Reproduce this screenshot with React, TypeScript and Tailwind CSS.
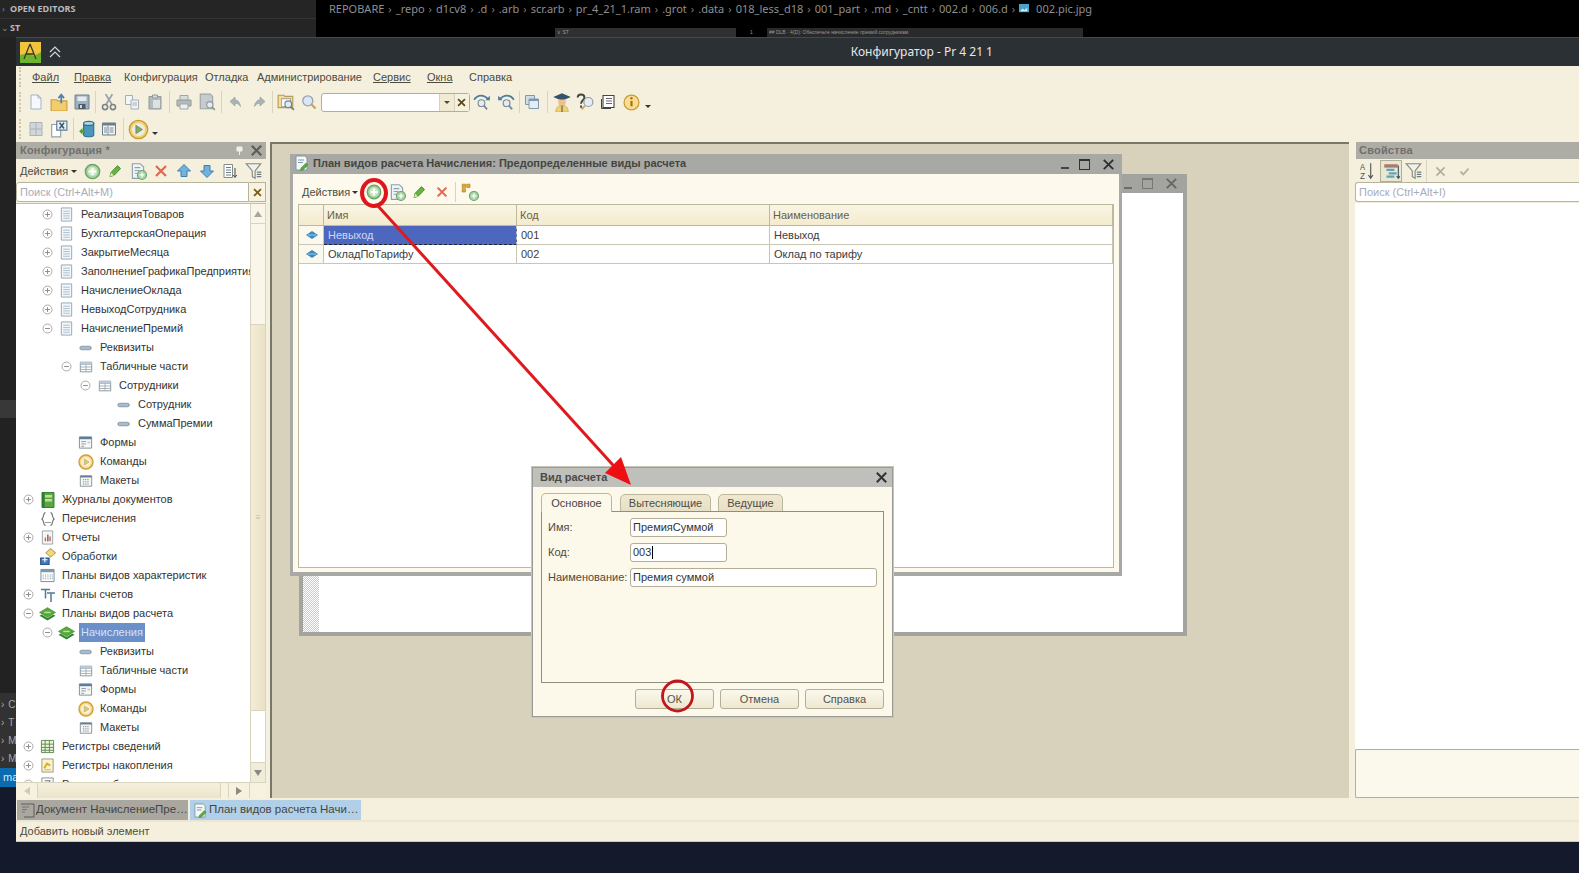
import React from "react";

type P = { s?: number; children?: React.ReactNode; className?: string };
const Svg = ({ s = 16, children, className }: P) => (
  <svg width={s} height={s} viewBox="0 0 16 16" fill="none" className={`shrink-0 ${className ?? ""}`}>{children}</svg>
);

const PlusBadge = () => (
  <g>
    <circle cx="11.5" cy="11.5" r="4" fill="#a9d4a4" stroke="#6f9f72" />
    <path d="M11.5 9.3v4.4M9.3 11.5h4.4" stroke="#fff" strokeWidth="1.2" />
  </g>
);
const Page = ({ fill = "#f7fbff", line = "#8ea0ad" }: { fill?: string; line?: string }) => (
  <path d="M3 1.5h7l3 3v10H3z" fill={fill} stroke={line} />
);

const IAdd = ({ s = 18 }: { s?: number }) => (
  <Svg s={s}>
    <circle cx="8" cy="8" r="6.7" fill="#a7d3a0" stroke="#6da46b" strokeWidth="1.4" />
    <circle cx="8" cy="8" r="4.4" fill="#cde8c8" />
    <path d="M8 4.6v6.8M4.6 8h6.8" stroke="#fff" strokeWidth="2" />
  </Svg>
);
const IPencil = () => (
  <Svg>
    <path d="M3 13.5l1-4 6.5-6.8 3 2.9L7 12.4z" fill="#69b244" stroke="#3f8a2e" />
    <path d="M3 13.5l1-4 3 2.9z" fill="#d8e9a8" />
  </Svg>
);
const IDocAdd = () => (
  <Svg s={18}>
    <Page fill="#eef4f6" />
    <path d="M5 5h5M5 7.5h4M5 10h2.5" stroke="#8ea0ad" />
    <PlusBadge />
  </Svg>
);
const IX = ({ c = "#e3674f", w = 2.4, s = 16 }: { c?: string; w?: number; s?: number }) => (
  <Svg s={s}>
    <path d="M3 3l10 10M13 3L3 13" stroke={c} strokeWidth={w} />
  </Svg>
);
const IArrow = ({ down }: { down?: boolean }) => (
  <Svg className={down ? "rotate-180" : ""}>
    <path d="M8 1.5L14.5 8H11v5.5H5V8H1.5z" fill="#6fb2dc" stroke="#3f7fae" />
  </Svg>
);
const IListDown = () => (
  <Svg>
    <path d="M2 1.5h8.5v13H2z" fill="#fff" stroke="#7f8c8d" />
    <path d="M4 4.5h5M4 7h5M4 9.500h5M4 12h5" stroke="#6f7d85" />
    <path d="M13 5v8.500M11.300 12l1.700 2.500 1.700-2.500" stroke="#444" />
  </Svg>
);
const IFilter = () => (
  <Svg s={18}>
    <path d="M1 1.500h13L9 8v6.500L6.500 13V8z" fill="#eef0ea" stroke="#85897d" />
    <path d="M10.500 9h4M10.500 11h4M10.500 13h4" stroke="#6f7d85" />
  </Svg>
);
const ICirclePM = ({ minus }: { minus?: boolean }) => (
  <Svg s={11}>
    <circle cx="8" cy="8" r="6.500" fill="#fff" stroke="#a8a8a8" strokeWidth="1.400" />
    <path d={minus ? "M4.500 8h7" : "M4.500 8h7M8 4.500v7"} stroke="#8a8a8a" strokeWidth="1.400" />
  </Svg>
);

const TDoc = () => (
  <Svg s={15}>
    <path d="M2.500 1h11v14h-11z" fill="#f2f7fb" stroke="#97a3ac" />
    <path d="M4.500 4.500h7M4.500 7h7M4.500 9.500h7M4.500 12h7" stroke="#a9bccb" />
  </Svg>
);
const TAttr = () => (
  <Svg s={14}>
    <rect x="1" y="6" width="13" height="4" rx="2" fill="#a9bccb" stroke="#82929e" />
  </Svg>
);
const TTable = () => (
  <Svg s={14}>
    <path d="M1.500 2.500h13v11h-13z" fill="#fff" stroke="#7f8d96" />
    <path d="M1.500 5h13M8 2.500v11M1.500 8h13M1.500 10.800h13" stroke="#9aa8b2" />
    <path d="M1.500 2.500h13V5h-13z" fill="#bccad3" />
  </Svg>
);
const TForm = () => (
  <Svg s={15}>
    <path d="M1.500 2h13v12h-13z" fill="#f7f8f6" stroke="#7f8d96" />
    <path d="M1.500 2h13v2.500h-13z" fill="#5b7f9e" />
    <path d="M3.500 7h5M3.500 9.500h5M3.500 12h3" stroke="#8a98a2" />
    <path d="M10 7h3v2h-3z" fill="#c7ced3" />
  </Svg>
);
const TCmd = () => (
  <Svg s={16}>
    <circle cx="8" cy="8" r="7" fill="#f5d88a" stroke="#cf9f38" strokeWidth="1.400" />
    <circle cx="8" cy="8" r="4.800" fill="#fdf3d3" />
    <path d="M6.300 5l4.700 3-4.700 3z" fill="#d9c98c" stroke="#b9a05a" strokeWidth=".6" />
  </Svg>
);
const TMak = () => (
  <Svg s={14}>
    <path d="M1.500 2h13v12h-13z" fill="#f7f8f6" stroke="#7f8d96" />
    <path d="M1.500 2h13v2h-13z" fill="#6b8095" />
    <path d="M4.500 6.500h7M4.500 9h7M4.500 11.500h7" stroke="#6f7d85" strokeDasharray="1.500 1" />
  </Svg>
);
const TJournal = () => (
  <Svg s={16}>
    <path d="M2 .5h12v15H2z" fill="#5aa544" stroke="#3d7f30" />
    <path d="M5 3h7v2.500H5zM5 7h7v2.500H5z" fill="#c2e18f" />
    <path d="M2 .5h2.500v15H2z" fill="#2f7a33" />
  </Svg>
);
const TEnum = () => (
  <Svg s={16}>
    <path d="M5.500 1.500C3 1.500 4 7 2 8c2 1 1 6.500 3.500 6.500M10.500 1.500C13 1.500 12 7 14 8c-2 1-1 6.500-3.500 6.500" stroke="#5f6870" strokeWidth="1.100" />
    <path d="M5.500 11.500h1M7.500 11.500h1M9.500 11.500h1" stroke="#333" />
  </Svg>
);
const TReport = () => (
  <Svg s={15}>
    <path d="M2.500 1h11v14h-11z" fill="#f8f6ee" stroke="#97a3ac" />
    <path d="M5 12V8h1.500v4zM7.500 12V5H9v7zM10 12V7h1.500v5z" fill="#c4655f" />
    <path d="M7.500 12V5H9v7z" fill="#5a86b3" />
  </Svg>
);
const TProc = () => (
  <Svg s={17}>
    <path d="M11 .5L15.500 4.500 11 8.500 6.500 4.500z" fill="#efd987" stroke="#c3a84a" />
    <path d="M1.500 9.500h8v6h-8z" fill="#3f79b5" stroke="#2a5a8f" />
    <path d="M5.500 6v7.500M3 11h5" stroke="#fff" />
  </Svg>
);
const TChar = () => (
  <Svg s={15}>
    <path d="M1 1.500h14v13H1z" fill="#fff" stroke="#728a9c" />
    <path d="M1 1.500h14V4.500H1z" fill="#7d98ad" />
    <path d="M3.500 7v5M6 7v5M8.500 7v5M11 7v5M13 7v5" stroke="#6d8aa1" strokeDasharray="1 1" />
  </Svg>
);
const TAcc = () => (
  <Svg s={16}>
    <path d="M1 2.500h9M5.500 2.500v9M7 6h8M11 6v9" stroke="#557a93" strokeWidth="1.500" />
  </Svg>
);
const TLayers = ({ s = 17 }: { s?: number }) => (
  <Svg s={s}>
    <path d="M8 2.500L15.500 7 8 11.500.5 7z" fill="#58a83e" stroke="#37832b" strokeWidth=".6" />
    <path d="M2.500 9L8 12.300 13.500 9l2 1.200L8 14.500.5 10.200z" fill="#2f8a2c" />
    <path d="M5 7h6" stroke="#bfe28e" strokeWidth="1.400" />
  </Svg>
);
const TRegInfo = () => (
  <Svg s={15}>
    <path d="M1.500 1.500h13v13h-13z" fill="#e9f3dc" stroke="#5f8a4f" />
    <path d="M1.500 5.500h13M1.500 9h13M1.500 12h13M5.500 1.500v13M10 1.500v13" stroke="#5f8a4f" />
  </Svg>
);
const TRegAcc = () => (
  <Svg s={15}>
    <path d="M2 1h12v14H2z" fill="#fbf3cf" stroke="#9c9776" />
    <path d="M4.500 11l3-5 3.500 2" stroke="#d8ac1e" strokeWidth="2" />
    <path d="M4.500 12.500h7" stroke="#b1b39d" />
  </Svg>
);
const TReg3 = () => (
  <Svg s={15}>
    <path d="M2 1h12v14H2z" fill="#fff" stroke="#7f8d96" />
    <path d="M5 4h6l-3 3 3 3H5" stroke="#5f6d75" />
  </Svg>
);

const gr = "#a6b0b4";
const ToolIcons = {
  newDoc: () => (
    <Svg><path d="M3 1h7l3 3v11H3z" fill="#f5f9fe" stroke="#a2b3c2" /><path d="M10 1v3h3" stroke="#a2b3c2" /></Svg>
  ),
  open: () => (
    <Svg s={18}><path d="M1 6h5l1 1h8v9H1z" fill="#f3cc6e" stroke="#c79e3a" /><path d="M10 9V2M7.500 4.500L10 1.500l2.500 3" stroke="#4d83ad" strokeWidth="1.600" /></Svg>
  ),
  save: () => (
    <Svg><path d="M1 1h14v14H1z" fill="#9fb1bf" stroke="#6f8494" /><path d="M3.500 2.500h9v4.500h-9z" fill="#e5ebef" /><path d="M4.500 10h7v5h-7z" fill="#4e5b66" /><path d="M6 11h2v3H6z" fill="#cfd8de" /></Svg>
  ),
  cut: () => (
    <Svg s={18}><path d="M5 1l5.500 9M11 1L5.500 10" stroke="#9aa2a8" strokeWidth="1.600" /><circle cx="4.500" cy="12.500" r="2.300" stroke="#7b8388" strokeWidth="1.400" /><circle cx="11.500" cy="12.500" r="2.300" stroke="#7b8388" strokeWidth="1.400" /></Svg>
  ),
  copy: () => (
    <Svg><path d="M1.500 1.500h7v9h-7z" fill="#f4f6f7" stroke={gr} /><path d="M7 6h7.500v9H7z" fill="#eef3f6" stroke={gr} /><path d="M8.500 9h4.500M8.500 11h4.500" stroke={gr} /></Svg>
  ),
  paste: () => (
    <Svg><path d="M2 2.500h12V15H2z" fill="#b3bbbd" stroke="#8f989b" /><path d="M5.500 1h5v3h-5z" fill="#d6dbdc" stroke="#8f989b" /><path d="M6 6h7v8H6z" fill="#dce1e3" /></Svg>
  ),
  print: () => (
    <Svg><path d="M4 1.500h8v5H4z" fill="#d8dcdc" stroke="#9ea5a6" /><path d="M1 6h14v6H1z" fill="#b5babb" stroke="#8f989b" /><path d="M4 10h8v5H4z" fill="#eef0f0" stroke="#9ea5a6" /></Svg>
  ),
  preview: () => (
    <Svg s={18}><path d="M2 1h9l2 2v11H2z" fill="#c5cbce" stroke="#9ea5a6" /><circle cx="10.500" cy="10.500" r="2.800" fill="#e5ebef" stroke="#8f989b" /><path d="M12.500 12.500l2.500 2.500" stroke="#8f989b" strokeWidth="1.500" /></Svg>
  ),
  undo: () => (
    <Svg><path d="M7 3L2 7.500 7 12V9.300c2.500 0 4 .8 5.500 3.200C12 8.500 10 6 7 5.800z" fill="#a9b3b8" stroke="#8f989b" strokeWidth=".6" /></Svg>
  ),
  redo: () => (
    <Svg className="-scale-x-100"><path d="M7 3L2 7.500 7 12V9.300c2.500 0 4 .8 5.500 3.200C12 8.500 10 6 7 5.800z" fill="#a9b3b8" stroke="#8f989b" strokeWidth=".6" /></Svg>
  ),
  findFiles: () => (
    <Svg s={18}><path d="M1 2h5l1 1h7v10H1z" fill="#f5dd9b" stroke="#b79c52" /><path d="M4 5h8v7H4z" fill="#fff" stroke="#aaa" /><circle cx="10" cy="10" r="3" fill="#dfeaf1" stroke="#6f8494" /><path d="M12 12l3 3" stroke="#6f8494" strokeWidth="1.600" /></Svg>
  ),
  search: () => (
    <Svg><circle cx="6.800" cy="6.800" r="5" fill="#dde5f2" stroke="#92a3b8" strokeWidth="1.300" /><path d="M10.500 10.500l4 4" stroke="#c79e5a" strokeWidth="2.200" /></Svg>
  ),
  searchPrev: () => (
    <Svg s={18}><path d="M1 6c3-5 9-5 13 0" stroke="#4d7d9c" strokeWidth="1.500" /><path d="M15 2.500v4h-4" fill="#4d7d9c" /><circle cx="7.500" cy="9" r="3" fill="#e5ebef" stroke="#788a99" /><path d="M9.500 11l3 3.500" stroke="#788a99" strokeWidth="1.600" /></Svg>
  ),
  searchNext: () => (
    <Svg s={18} className=""><path d="M15 6C12 1 6 1 2 6" stroke="#4d7d9c" strokeWidth="1.500" /><path d="M1 2.500v4h4" fill="#4d7d9c" /><circle cx="8.500" cy="9" r="3" fill="#e5ebef" stroke="#788a99" /><path d="M10.500 11l3 3.500" stroke="#788a99" strokeWidth="1.600" /></Svg>
  ),
  windows: () => (
    <Svg><path d="M1.500 1.500h9v9h-9z" fill="#cfdde8" stroke="#7f98ab" /><path d="M5 5h9.500v9.500H5z" fill="#e4edf4" stroke="#7f98ab" /><path d="M5 5h9.500v2H5z" fill="#7f98ab" /></Svg>
  ),
  scholar: () => (
    <Svg s={20}><path d="M8 1l7 3-7 3-7-3z" fill="#34536b" /><path d="M5 6h6v2.500a3 3 0 01-6 0z" fill="#eec08f" /><path d="M3 16c0-4 2-5 5-5s5 1 5 5z" fill="#f0d36f" stroke="#c4a545" strokeWidth=".5" /><path d="M8 11v5" stroke="#666" /></Svg>
  ),
  helpFind: () => (
    <Svg s={18}><path d="M1.500 4c0-3.500 6-3.500 6 0 0 2.500-3 2.500-3 5.500M4.500 11v2" stroke="#444" strokeWidth="1.700" /><circle cx="11" cy="8" r="4" fill="#e6edf2" stroke="#8a9aa6" /><path d="M8 11.500l-3 3" stroke="#c3a45a" strokeWidth="1.500" /></Svg>
  ),
  book: () => (
    <Svg><path d="M3 1.500h11v12H3z" fill="#fff" stroke="#444" strokeWidth="1.100" /><path d="M6 4.500h6M6 7h6M6 9.500h6" stroke="#666" /><path d="M1.500 5v9.500H11" stroke="#444" /></Svg>
  ),
  info: () => (
    <Svg s={17}><circle cx="8" cy="8" r="7" fill="#f9dd92" stroke="#c79e3a" strokeWidth="1.200" /><path d="M8 6.500v5" stroke="#b06a12" strokeWidth="2" /><circle cx="8" cy="4" r="1.100" fill="#b06a12" /></Svg>
  ),
  grid: () => (
    <Svg><path d="M2 1.500h12v13H2z" fill="#d0d6d9" stroke="#aab3b6" /><path d="M8 1.500v13M2 8h12" stroke="#aab3b6" /></Svg>
  ),
  xDoc: () => (
    <Svg s={18}><path d="M1.500 4h8v11h-8z" fill="#fff" stroke="#91a0aa" /><path d="M6 1h9v8H6z" fill="#eaf1f5" stroke="#577c96" /><path d="M8.500 2.500l4 5M12.500 2.500l-4 5" stroke="#36566e" strokeWidth="1.300" /></Svg>
  ),
  db: () => (
    <Svg s={18}><path d="M5 3v10c0 2.500 9 2.500 9 0V3z" fill="#4a96bc" stroke="#2d6f90" /><ellipse cx="9.500" cy="3" rx="4.500" ry="1.800" fill="#b5d8e8" stroke="#2d6f90" /><path d="M1 10l3-3v2h2v2H4v2z" fill="#4d9e3b" /></Svg>
  ),
  tableWin: () => (
    <Svg><path d="M1.500 2h13v12h-13z" fill="#f0f3f4" stroke="#6a7e8b" /><path d="M1.500 2h13v2.500h-13z" fill="#6a7e8b" /><path d="M7 4.500V14M3 7h3M3 9h3M3 11h3M8.500 7h4M8.500 9h4M8.500 11h4" stroke="#7d8e99" /></Svg>
  ),
  play: () => (
    <Svg s={21}><circle cx="8" cy="8" r="7" fill="#f4cf6f" stroke="#c49a36" strokeWidth="1" /><circle cx="8" cy="8" r="5" fill="#eaedd9" /><path d="M6 4.800l5 3.200-5 3.200z" fill="#8aa36f" stroke="#5d7d55" strokeWidth=".5" /></Svg>
  ),
  keyAdd: () => (
    <Svg s={18}><path d="M1 1h3v3H1zM5 1h3v3H5zM1 5h3v3H1z" fill="#e0a82a" stroke="#a97a10" strokeWidth=".5" /><PlusBadge /></Svg>
  ),
  az: () => (
    <Svg s={18}><text x="0" y="7" fontSize="7.500" fill="#555" fontFamily="Liberation Mono">A</text><text x="0" y="15" fontSize="7.500" fill="#555" fontFamily="Liberation Mono">Z</text><path d="M9.500 1v13M7.500 11.500l2 3 2-3" stroke="#555" /></Svg>
  ),
  cat: () => (
    <Svg s={18}><path d="M2 2h12v3H2z" fill="#8d4b45" opacity=".7" /><path d="M4 6h7v2H4zM6 9h7v2H6zM4 12h7v2H4z" fill="#62a3b7" /><path d="M14.500 3v11M13 12.500l1.500 2 1.500-2" stroke="#456" /></Svg>
  ),
};

const Tool = ({ children, w = "w-[23px]" }: { children: React.ReactNode; w?: string }) => (
  <div className={`flex h-[22px] items-center justify-center ${w}`}>{children}</div>
);
const Sep = ({ w = "w-[6px]" }: { w?: string }) => (
  <div className={`flex h-[22px] justify-center ${w}`}><div className="h-full w-px bg-[#d9d4bd]" /></div>
);
const Grip = () => <div className="ml-[3px] h-[20px] w-[3px] border-l-2 border-dotted border-[#cdc8ad]" />;
const Caret = ({ c = "border-t-[#333]" }: { c?: string }) => (
  <div className={`h-0 w-0 border-x-[3px] border-t-[3px] border-x-transparent ${c}`} />
);

const T = ToolIcons;

type Row = { l: number; t: string; i: React.ReactNode; e?: "p" | "m"; sel?: boolean };
const rows: Row[] = [
  { l: 1, t: "РеализацияТоваров", i: <TDoc />, e: "p" },
  { l: 1, t: "БухгалтерскаяОперация", i: <TDoc />, e: "p" },
  { l: 1, t: "ЗакрытиеМесяца", i: <TDoc />, e: "p" },
  { l: 1, t: "ЗаполнениеГрафикаПредприятия", i: <TDoc />, e: "p" },
  { l: 1, t: "НачислениеОклада", i: <TDoc />, e: "p" },
  { l: 1, t: "НевыходСотрудника", i: <TDoc />, e: "p" },
  { l: 1, t: "НачислениеПремий", i: <TDoc />, e: "m" },
  { l: 2, t: "Реквизиты", i: <TAttr /> },
  { l: 2, t: "Табличные части", i: <TTable />, e: "m" },
  { l: 3, t: "Сотрудники", i: <TTable />, e: "m" },
  { l: 4, t: "Сотрудник", i: <TAttr /> },
  { l: 4, t: "СуммаПремии", i: <TAttr /> },
  { l: 2, t: "Формы", i: <TForm /> },
  { l: 2, t: "Команды", i: <TCmd /> },
  { l: 2, t: "Макеты", i: <TMak /> },
  { l: 0, t: "Журналы документов", i: <TJournal />, e: "p" },
  { l: 0, t: "Перечисления", i: <TEnum /> },
  { l: 0, t: "Отчеты", i: <TReport />, e: "p" },
  { l: 0, t: "Обработки", i: <TProc /> },
  { l: 0, t: "Планы видов характеристик", i: <TChar /> },
  { l: 0, t: "Планы счетов", i: <TAcc />, e: "p" },
  { l: 0, t: "Планы видов расчета", i: <TLayers />, e: "m" },
  { l: 1, t: "Начисления", i: <TLayers />, e: "m", sel: true },
  { l: 2, t: "Реквизиты", i: <TAttr /> },
  { l: 2, t: "Табличные части", i: <TTable /> },
  { l: 2, t: "Формы", i: <TForm /> },
  { l: 2, t: "Команды", i: <TCmd /> },
  { l: 2, t: "Макеты", i: <TMak /> },
  { l: 0, t: "Регистры сведений", i: <TRegInfo />, e: "p" },
  { l: 0, t: "Регистры накопления", i: <TRegAcc />, e: "p" },
  { l: 0, t: "Регистры бухгалтерии", i: <TReg3 />, e: "p" },
];

const TreeRow = ({ r }: { r: Row }) => (
  <div className="flex h-[19px] items-center whitespace-nowrap" style={{ paddingLeft: 6 + r.l * 19 }}>
    <div className="flex w-[13px] shrink-0 justify-center">{r.e && <ICirclePM minus={r.e === "m"} />}</div>
    <div className="ml-[1px] flex w-[23px] shrink-0 justify-center">{r.i}</div>
    <span className={r.sel ? "ml-[1px] flex h-[19px] items-center bg-[#6a8fc9] px-[2px] text-[#d5e2f5]" : "ml-[3px] text-[#333333]"}>{r.t}</span>
  </div>
);

const PanelHeader = ({ title, children }: { title: string; children?: React.ReactNode }) => (
  <div className="flex h-[17px] items-center justify-between bg-[#adada6] pl-[4px] pr-[2px] text-[11px] font-bold tracking-[0.2px] text-[#70706c]">
    <span>{title}</span>
    {children}
  </div>
);

const SearchBox = ({ ph, children, open }: { ph: string; children?: React.ReactNode; open?: boolean }) => (
  <div className="flex h-[20px] items-stretch">
    <div className={`flex flex-1 items-center rounded-l-[3px] border border-[#b9b59c] bg-white pl-[3px] text-[11px] text-[#a9acb8] ${open ? "border-r-0" : ""}`}>{ph}</div>
    {children}
  </div>
);

const WinBtns = ({ muted }: { muted?: boolean }) => (
  <div className="flex items-center">
    <div className={`mr-[10px] mt-[8px] h-[2px] w-[8px] ${muted ? "bg-[#6c6c68]" : "bg-[#444]"}`} />
    <div className={`mr-[6px] h-[11px] w-[11px] border ${muted ? "border-t-2 border-[#777]" : "border-t-2 border-[#333]"}`} />
    <div className="flex w-[24px] justify-center"><IX c={muted ? "#666" : "#2f2f2f"} w={2} s={15} /></div>
  </div>
);

const Cell = ({ children, className }: { children?: React.ReactNode; className?: string }) => (
  <div className={`flex items-center border-r border-b border-[#c9c6b3] pl-[4px] pr-[3px] ${className ?? ""}`}>{children}</div>
);
const Diamond = () => (
  <svg width="12" height="8" viewBox="0 0 12 8"><path d="M6 0l6 4-6 4-6-4z" fill="#3d88bd" /><path d="M2 4h8" stroke="#9fd0ee" /></svg>
);
const HCell = ({ children }: { children?: React.ReactNode }) => (
  <div className="flex items-center border-r border-[#bdb99f] bg-gradient-to-b from-[#f9f5e4] to-[#f4ebcf] px-[3px] text-[#6c5f3e]">{children}</div>
);

const Tab = ({ children, w, active }: { children: React.ReactNode; w: string; active?: boolean }) => (
  <div className={`flex items-center justify-center rounded-t-[5px] border border-[#bbb79e] ${w} ${active ? "relative z-10 h-[19px] border-b-0 border-t-[#e0b060] bg-[#fcf8ea] text-[#444]" : "mt-[1px] h-[18px] bg-gradient-to-b from-[#efe8d0] to-[#e7dfc5] text-[#4d4d47]"}`}>{children}</div>
);
const Field = ({ label, value, w, caret }: { label: string; value: string; w: string; caret?: boolean }) => (
  <div className="flex h-[19px] items-center">
    <span className="w-[82px] whitespace-nowrap text-[#4b4a43]">{label}</span>
    <div className={`flex h-[19px] items-center rounded-[3px] border border-[#b2ae97] bg-white pl-[2px] text-[#333] ${w}`}>
      {value}{caret && <span className="ml-px h-[13px] w-px bg-black" />}
    </div>
  </div>
);
const Btn = ({ children }: { children: React.ReactNode }) => (
  <div className="flex h-[20px] w-[79px] items-center justify-center rounded-[3px] border border-[#b2ae97] bg-gradient-to-b from-[#fbf8ec] to-[#eee7d1] text-[#55524a]">{children}</div>
);

const menu: [string, string, string][] = [
  ["Файл", "w-[42px]", "underline"],
  ["Правка", "w-[50px]", "underline"],
  ["Конфигурация", "w-[81px]", ""],
  ["Отладка", "w-[52px]", ""],
  ["Администрирование", "w-[116px]", ""],
  ["Сервис", "w-[54px]", "underline"],
  ["Окна", "w-[42px]", "underline"],
  ["Справка", "w-[60px]", ""],
];
const crumbs = ["REPOBARE", "_repo", "d1cv8", ".d", ".arb", "scr.arb", "pr_4_21_1.ram", ".grot", ".data", "018_less_d18", "001_part", ".md", "_cntt", "002.d", "006.d"];

export default function App() {
  return (
    <div className="relative flex h-[873px] w-[1579px] flex-col overflow-hidden bg-[#141a2c] font-['Liberation_Sans',sans-serif] text-[11px]">
      {/* editor top strip */}
      <div className="flex h-[37px] shrink-0 bg-black">
        <div className="flex w-[316px] flex-col bg-[#252526] font-['Open_Sans',sans-serif] text-[9px] font-bold text-[#bbbbbb]">
          <div className="flex h-[18px] items-center"><span className="w-[10px] pl-[2px] font-normal text-[#888]">›</span>OPEN EDITORS</div>
          <div className="flex h-[19px] items-center border-t border-[#333]"><span className="w-[10px] pl-[1px] font-normal text-[#888]">⌄</span>ST</div>
        </div>
        <div className="flex flex-1 flex-col">
          <div className="flex h-[28px] items-start gap-[4px] pl-[13px] pt-[0px] font-['Noto_Sans',sans-serif] text-[11px] leading-[18px] text-[#8f8f8f]">
            {crumbs.map((c, i) => (
              <React.Fragment key={i}>
                <span>{c}</span>
                <span className="text-[#777]">›</span>
              </React.Fragment>
            ))}
            <svg width="10" height="10" viewBox="0 0 11 11" className="mt-[4px]"><rect width="11" height="9" fill="#4ba3c7" /><path d="M1 8l3-3 2 2 3-3v4z" fill="#d5eef7" /></svg>
            <span className="ml-[3px]">002.pic.jpg</span>
          </div>
          <div className="flex h-[9px] items-center text-[5px] text-[#999]">
            <div className="ml-[239px] flex h-full w-[181px] items-center bg-[#303030] pl-[2px]">∨ ST</div>
            <div className="w-[31px] text-center">1</div>
            <div className="flex h-full w-[316px] items-center bg-[#2a2a2a] pl-[2px]">## DLB · 4(D): Обеспечьте начисление премий сотрудникам</div>
          </div>
        </div>
      </div>

      <div className="flex h-[805px] shrink-0">
        {/* left strip */}
        <div className="flex h-[750px] w-[16px] shrink-0 flex-col bg-[#222223] text-[#a8a8a8]">
          <div className="h-[363px]" />
          <div className="h-[18px] bg-[#383839]" />
          <div className="h-[275px]" />
          <div className="flex h-[75px] flex-col bg-[#323233] pt-[2px]">
            {["С", "Т", "М", "М"].map((c, i) => (
              <div key={i} className="flex h-[18.500px] items-center gap-[4px] overflow-hidden pl-[1px] text-[10px]"><span>›</span><span>{c}</span></div>
            ))}
          </div>
          <div className="flex h-[19px] items-center overflow-hidden bg-[#0a6bb0] pl-[3px] text-[11px] text-[#d8e8f4]">ma</div>
        </div>

        {/* 1C window */}
        <div className="flex w-[1563px] flex-col bg-[#f5f0dd]">
          <div className="flex h-[29px] shrink-0 items-center border-t border-[#44494d] bg-[#2b3035]">
            <svg width="21" height="21" viewBox="0 0 21 21" className="ml-[4px]">
              <rect width="21" height="21" fill="#f2c33c" />
              <path d="M0 21V13l8-2 6 3 7-4v11z" fill="#6db52d" />
              <path d="M10 2L4 17M10 2l6 15M6 12h8" stroke="#3b3b25" strokeWidth="1.300" fill="none" />
            </svg>
            <svg width="14" height="14" viewBox="0 0 14 14" className="ml-[7px]" fill="none"><path d="M2 7l5-5 5 5M2 12l5-5 5 5" stroke="#d5d8da" strokeWidth="1.200" /></svg>
            <div className="w-[931px] text-right font-['Noto_Sans',sans-serif] text-[12px] leading-none text-[#e8e8e8]">Конфигуратор - Pr 4 21 1</div>
          </div>

          <div className="flex h-[22px] shrink-0 items-center">
            <Grip />
            <div className="ml-[10px] flex">
              {menu.map(([t, w, u]) => (
                <div key={t} className={`whitespace-nowrap text-[11px] text-[#4c4b40] ${w}`}>
                  <span className={u === "underline" ? "underline" : ""}>{t}</span>
                </div>
              ))}
            </div>
          </div>

          <div className="flex h-[28px] shrink-0 items-center">
            <Grip />
            <div className="w-[2.500px]" />
            <Tool><T.newDoc /></Tool><Tool><T.open /></Tool><Tool><T.save /></Tool>
            <Sep w="w-[4px]" />
            <Tool><T.cut /></Tool><Tool><T.copy /></Tool><Tool><T.paste /></Tool>
            <Sep />
            <Tool><T.print /></Tool><Tool><T.preview /></Tool>
            <Sep />
            <Tool><T.undo /></Tool><Tool><T.redo /></Tool>
            <Sep w="w-[4px]" />
            <Tool><T.findFiles /></Tool><Tool><T.search /></Tool>
            <div className="flex h-[19px] w-[149px] rounded-[3px] border border-[#b2ae97] bg-white">
              <div className="flex-1" />
              <div className="flex w-[15px] items-center justify-center border-l border-[#d5d1ba] bg-[#f1ebd6]"><Caret c="border-t-[#5a4a20]" /></div>
              <div className="flex w-[15px] items-center justify-center border-l border-[#d5d1ba] bg-[#f6f1df]"><IX c="#5a4a20" w={2.600} s={11} /></div>
            </div>
            <Tool w="w-[25px]"><T.searchPrev /></Tool><Tool><T.searchNext /></Tool>
            <Sep w="w-[3px]" />
            <Tool><T.windows /></Tool>
            <Sep w="w-[7px]" />
            <Tool><T.scholar /></Tool><Tool><T.helpFind /></Tool><Tool><T.book /></Tool><Tool w="w-[24px]"><T.info /></Tool>
            <div className="ml-[1px] mt-[8px]"><Caret /></div>
          </div>

          <div className="flex h-[26px] shrink-0 items-center">
            <Grip />
            <div className="w-[2.500px]" />
            <Tool><T.grid /></Tool><Tool><T.xDoc /></Tool>
            <Sep w="w-[5px]" />
            <Tool w="w-[22px]"><T.db /></Tool><Tool><T.tableWin /></Tool>
            <Sep />
            <Tool><T.play /></Tool>
            <div className="ml-[2px] mt-[8px]"><Caret /></div>
          </div>

          <div className="flex min-h-0 flex-1">
            {/* config panel */}
            <div className="flex w-[250px] shrink-0 flex-col">
              <PanelHeader title="Конфигурация *">
                <div className="flex items-center gap-[6px]">
                  <svg width="7" height="9" viewBox="0 0 7 9"><path d="M1 1h5v4H1zM3.500 5v4" stroke="#eee" fill="#eee" /></svg>
                  <IX c="#5c5c58" w={2.400} s={15} />
                </div>
              </PanelHeader>
              <div className="flex h-[23px] items-center pl-[4px] pt-[1px]">
                <span className="text-[#4c4b40]">Действия</span>
                <div className="ml-[3px]"><Caret /></div>
                <div className="flex w-[31px] justify-center"><IAdd s={17} /></div>
                <Tool w="w-[13px]"><IPencil /></Tool>
                <Tool w="w-[33px]"><IDocAdd /></Tool>
                <Tool w="w-[13px]"><IX w={2.200} /></Tool>
                <Tool w="w-[33px]"><IArrow /></Tool>
                <Tool w="w-[13px]"><IArrow down /></Tool>
                <Tool w="w-[34px]"><IListDown /></Tool>
                <Tool w="w-[14px]"><IFilter /></Tool>
              </div>
              <SearchBox ph="Поиск (Ctrl+Alt+M)">
                <div className="flex w-[17px] items-center justify-center border border-l-0 border-[#b9b59c] bg-[#f8f3e0]"><IX c="#7a5a14" w={2.600} s={11} /></div>
              </SearchBox>
              <div className="mt-[1px] flex min-h-0 flex-1 border-t border-[#c4c0a8]">
                <div className="min-w-0 flex-1 overflow-hidden bg-white pt-[1px] text-[11px]">
                  {rows.map((r, i) => <TreeRow key={i} r={r} />)}
                </div>
                <div className="flex w-[16px] shrink-0 flex-col border-x border-[#d9d4bd] bg-[#f9f6e9]">
                  <div className="flex h-[20px] items-center justify-center border-b border-[#d9d4bd]"><div className="h-0 w-0 border-x-[4px] border-b-[6px] border-x-transparent border-b-[#a7a79e]" /></div>
                  <div className="h-[100px] bg-[#faf7ea]" />
                  <div className="flex h-[387px] items-center justify-center border-y border-[#d9d4bd] bg-gradient-to-r from-[#f3edd6] to-[#e9e2c6] text-[8px] text-[#bbb]">≡</div>
                  <div className="flex-1 bg-white" />
                  <div className="flex h-[20px] items-center justify-center border-t border-[#d9d4bd] bg-[#f1ecda]"><div className="h-0 w-0 border-x-[4px] border-t-[6px] border-x-transparent border-t-[#8a8a80]" /></div>
                </div>
              </div>
              <div className="flex h-[16px] shrink-0 items-center border-t border-[#d9d4bd] bg-[#f7f2df]">
                <div className="flex w-[21px] justify-center"><div className="h-0 w-0 border-y-[4px] border-r-[6px] border-y-transparent border-r-[#cfcab2]" /></div>
                <div className="h-full w-[184px] border-x border-[#d9d4bd] bg-gradient-to-b from-[#f5f0dc] to-[#ece5cb]" />
                <div className="w-[7px]" />
                <div className="flex h-full w-[22px] items-center justify-center border-x border-[#d9d4bd]"><div className="h-0 w-0 border-y-[4px] border-l-[6px] border-y-transparent border-l-[#8a8a80]" /></div>
              </div>
            </div>

            <div className="w-[4px] shrink-0" />

            {/* MDI area */}
            <div className="relative w-[1079px] shrink-0 border-l-2 border-t-2 border-[#77776a] bg-[#d8d2bc]">
              {/* back window */}
              <div className="absolute left-[27px] top-[30px] flex h-[462px] w-[888px] flex-col border-b-[4px] border-l-[4px] border-r-[4px] border-[#a3a39f] bg-[#a3a39f]">
                <div className="flex h-[19px] shrink-0 items-center justify-end"><WinBtns muted /></div>
                <div className="flex min-h-0 flex-1 bg-white">
                  <div className="h-full w-[16px] bg-[repeating-conic-gradient(#cfcbb6_0%_25%,#ffffff_0%_50%)] bg-[length:2px_2px]" />
                </div>
              </div>

              {/* main window */}
              <div className="absolute left-[18px] top-[10px] flex h-[422px] w-[832px] flex-col border-x-[3px] border-b-[4px] border-[#a8a8a4] bg-[#a8a8a4]">
                <div className="flex h-[20px] shrink-0 items-center justify-between">
                  <div className="flex items-center gap-[2px] pb-[2px] pl-[1px] text-[11px] font-bold text-[#45453f]">
                    <svg width="16" height="16" viewBox="0 0 16 16" fill="none"><path d="M2 1h9l2 2v12H2z" fill="#f5f9f6" stroke="#7f98ab" /><path d="M4 5h6M4 7.500h5" stroke="#7f98ab" /><path d="M7 13l5-5 2 2-5 5-2.500.5z" fill="#5eaa3f" stroke="#3d7f30" strokeWidth=".5" /></svg>
                    <span className="ml-[1px]">План видов расчета Начисления: Предопределенные виды расчета</span>
                  </div>
                  <div className="-mr-[1px]"><WinBtns /></div>
                </div>
                <div className="flex min-h-0 flex-1 flex-col bg-[#fdf9ec] px-[5px] pb-[4px]">
                  <div className="flex h-[30px] shrink-0 items-center pl-[4px] pt-[6px]">
                    <span className="text-[#4c4b40]">Действия</span>
                    <div className="ml-[2px]"><Caret /></div>
                    <div className="flex w-[32px] justify-center"><IAdd s={16} /></div>
                    <Tool w="w-[13px]"><IDocAdd /></Tool>
                    <Tool w="w-[32px]"><IPencil /></Tool>
                    <Tool w="w-[14px]"><IX w={2.400} s={14} /></Tool>
                    <div className="ml-[6px] h-[20px] w-px bg-[#d9d4bd]" />
                    <Tool w="w-[28px]"><T.keyAdd /></Tool>
                  </div>
                  <div className="flex min-h-0 flex-1 flex-col border border-[#bdb99f] bg-white">
                    <div className="grid h-[21px] shrink-0 grid-cols-[25px_193px_253px_1fr] border-b border-[#bdb99f]">
                      <HCell />
                      <HCell>Имя</HCell>
                      <HCell>Код</HCell>
                      <HCell>Наименование</HCell>
                    </div>
                    <div className="grid h-[19px] shrink-0 grid-cols-[25px_193px_253px_1fr] text-[#3c3c3c]">
                      <Cell className="justify-center bg-[#fbf8ee]"><Diamond /></Cell>
                      <Cell className="border-dashed border-b-[#222] bg-[#4c67bd] text-[#cdd8f8]">Невыход</Cell>
                      <Cell>001</Cell>
                      <Cell>Невыход</Cell>
                    </div>
                    <div className="grid h-[19px] shrink-0 grid-cols-[25px_193px_253px_1fr] text-[#3c3c3c]">
                      <Cell className="justify-center bg-[#fbf8ee]"><Diamond /></Cell>
                      <Cell>ОкладПоТарифу</Cell>
                      <Cell>002</Cell>
                      <Cell>Оклад по тарифу</Cell>
                    </div>
                  </div>
                </div>
              </div>

              {/* dialog */}
              <div className="absolute left-[260px] top-[323px] flex h-[250px] w-[361px] flex-col border border-[#9a9a96] bg-[#fcf8ea] shadow-[0_0_0_1px_#c9c6b8]">
                <div className="flex h-[19px] shrink-0 items-center justify-between bg-[#bfbfbb] pl-[7px] pr-[3px] text-[11px] font-bold text-[#4a4a46]">
                  <span>Вид расчета</span>
                  <IX c="#333" w={2.200} s={15} />
                </div>
                <div className="flex min-h-0 flex-1 flex-col px-[8px] pt-[6px]">
                  <div className="flex h-[19px] shrink-0 items-end">
                    <Tab w="w-[71px]" active>Основное</Tab>
                    <div className="w-[8px]" />
                    <Tab w="w-[91px]">Вытесняющие</Tab>
                    <div className="w-[7px]" />
                    <Tab w="w-[65px]">Ведущие</Tab>
                  </div>
                  <div className="-mt-px flex h-[172px] shrink-0 flex-col gap-[6px] border border-[#8f8f7f] px-[6px] pt-[6px]">
                    <Field label="Имя:" value="ПремияСуммой" w="w-[97px]" />
                    <Field label="Код:" value="003" w="w-[97px]" caret />
                    <Field label="Наименование:" value="Премия суммой" w="w-[247px]" />
                  </div>
                  <div className="mt-[6px] flex justify-end gap-[6px]">
                    <Btn>ОК</Btn><Btn>Отмена</Btn><Btn>Справка</Btn>
                  </div>
                </div>
              </div>

              {/* annotations */}
              <svg className="pointer-events-none absolute left-0 top-0 h-full w-full" fill="none">
                <ellipse cx="102" cy="49" rx="12" ry="13" stroke="#e0141c" strokeWidth="4" />
                <path d="M106 62L350 331" stroke="#df1a1f" strokeWidth="3" />
                <path d="M359 341L333 329 349 313z" fill="#ee0f14" />
                <circle cx="405.500" cy="552" r="15" stroke="#c4141c" strokeWidth="2.800" />
              </svg>
            </div>

            <div className="w-[6px] shrink-0" />

            {/* properties panel */}
            <div className="flex min-w-0 flex-1 flex-col">
              <div className="ml-[1px] -mr-px [&>div]:pl-[3px]"><PanelHeader title="Свойства" /></div>
              <div className="flex h-[23px] items-center pl-[2px] pt-[1px]">
                <Tool><T.az /></Tool>
                <div className="flex h-[22px] w-[22px] items-center justify-center border border-[#b2ae97] bg-[#e9e6d2]"><T.cat /></div>
                <Tool><IFilter /></Tool>
                <Sep w="w-[2px]" />
                <Tool w="w-[26px]"><IX c="#b5ae9d" w={2.200} s={13} /></Tool>
                <Tool w="w-[22px]">
                  <Svg s={13}><path d="M3 8l3.500 3.500L13 4.500" stroke="#b5b19f" strokeWidth="2.200" /></Svg>
                </Tool>
              </div>
              <SearchBox ph="Поиск (Ctrl+Alt+I)" open />
              <div className="mt-[1px] flex-1 bg-white" />
              <div className="h-[49px] shrink-0 rounded-l-[2px] border border-r-0 border-[#b2ae97] bg-[#fbf8ec]" />
            </div>
          </div>

          {/* window tabs */}
          <div className="flex h-[24px] shrink-0 items-start border-b-2 border-[#ece7d2] pl-[1px] pt-[2px]">
            <div className="flex h-[20px] w-[171px] items-center gap-[1px] overflow-hidden bg-[#a9a79f] pl-[3px] text-[11.500px] text-[#45453f]">
              <svg width="15" height="15" viewBox="0 0 15 15" fill="none" className="shrink-0"><path d="M1 1h13v13H4" stroke="#5c5c58" /><path d="M2 4h7M2 6.500h5M2 9h3" stroke="#77776f" /></svg>
              <span className="truncate">Документ НачислениеПремий</span>
            </div>
            <div className="ml-[2px] flex h-[20px] w-[171px] items-center gap-[1px] overflow-hidden bg-[#b2cfe8] pl-[3px] text-[11.500px] text-[#45453f]">
              <svg width="15" height="15" viewBox="0 0 16 16" fill="none" className="shrink-0"><path d="M2 1h9l2 2v12H2z" fill="#f5f9f6" stroke="#7f98ab" /><path d="M4 5h6M4 7.500h5" stroke="#7f98ab" /><path d="M7 13l5-5 2 2-5 5-2.500.5z" fill="#5eaa3f" stroke="#3d7f30" strokeWidth=".5" /></svg>
              <span className="truncate">План видов расчета Начисления</span>
            </div>
          </div>

          {/* status bar */}
          <div className="flex h-[20px] shrink-0 items-center border-b border-[#cfcab6] pl-[4px] text-[#4c4b40]">Добавить новый элемент</div>
        </div>
      </div>
    </div>
  );
}
